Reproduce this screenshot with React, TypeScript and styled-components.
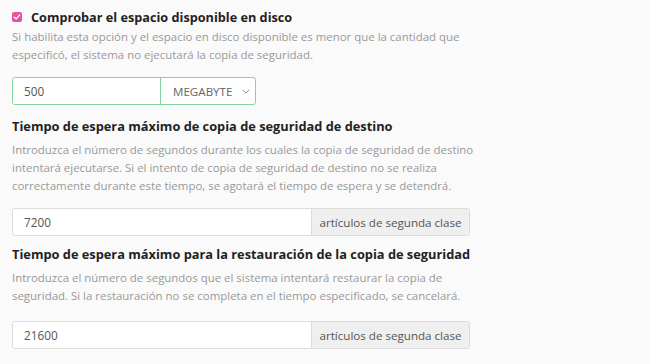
import React from "react";
import styled, { createGlobalStyle } from "styled-components";

const GlobalStyle = createGlobalStyle`
  html, body {
    margin: 0;
    padding: 0;
    background: #fafafa;
  }
  body {
    font-family: "Open Sans", "Liberation Sans", sans-serif;
  }
`;

export default function App() {
  return (
    <>
      <GlobalStyle />
      <StyledPage>
        <StyledCheckRow>
          <StyledCheckbox>
            <svg viewBox="0 0 10 10" width="8" height="8">
              <path
                d="M1.6 5.2 L4 7.4 L8.4 2.4"
                fill="none"
                stroke="#fff"
                strokeWidth="1.6"
                strokeLinecap="round"
                strokeLinejoin="round"
              />
            </svg>
          </StyledCheckbox>
          <StyledLabel>Comprobar el espacio disponible en disco</StyledLabel>
        </StyledCheckRow>
        <StyledHelp>
          Si habilita esta opción y el espacio en disco disponible es menor que
          la cantidad que
          <br />
          especificó, el sistema no ejecutará la copia de seguridad.
        </StyledHelp>

        <StyledGroup $width={242} $gap={13} $accent>
          <StyledInput>500</StyledInput>
          <StyledSelect>
            MEGABYTE
            <svg viewBox="0 0 10 6" width="8" height="5">
              <path
                d="M1 1 L5 5 L9 1"
                fill="none"
                stroke="#888"
                strokeWidth="1.2"
              />
            </svg>
          </StyledSelect>
        </StyledGroup>

        <StyledHeading $gap={12}>
          Tiempo de espera máximo de copia de seguridad de destino
        </StyledHeading>
        <StyledHelp>
          Introduzca el número de segundos durante los cuales la copia de
          seguridad de destino
          <br />
          intentará ejecutarse. Si el intento de copia de seguridad de destino
          no se realiza
          <br />
          correctamente durante este tiempo, se agotará el tiempo de espera y se
          detendrá.
        </StyledHelp>
        <StyledGroup $width={456} $gap={13}>
          <StyledInput>7200</StyledInput>
          <StyledAddon>artículos de segunda clase</StyledAddon>
        </StyledGroup>

        <StyledHeading $gap={9}>
          Tiempo de espera máximo para la restauración de la copia de seguridad
        </StyledHeading>
        <StyledHelp>
          Introduzca el número de segundos que el sistema intentará restaurar la
          copia de
          <br />
          seguridad. Si la restauración no se completa en el tiempo
          especificado, se cancelará.
        </StyledHelp>
        <StyledGroup $width={456} $gap={16}>
          <StyledInput>21600</StyledInput>
          <StyledAddon>artículos de segunda clase</StyledAddon>
        </StyledGroup>
      </StyledPage>
    </>
  );
}

const StyledPage = styled.main`
  width: 650px;
  height: 364px;
  box-sizing: border-box;
  padding: 9px 12px 0;
  overflow: hidden;
`;

const StyledCheckRow = styled.div`
  display: flex;
  align-items: center;
  gap: 9px;
  height: 16px;
`;

const StyledCheckbox = styled.span`
  width: 10px;
  height: 10px;
  border-radius: 2px;
  background: #e9529d;
  display: flex;
  align-items: center;
  justify-content: center;
`;

const StyledLabel = styled.span`
  font-size: 12.7px;
  font-weight: 700;
  color: #222;
`;

const StyledHeading = styled.h3<{ $gap: number }>`
  margin: ${(p) => p.$gap}px 0 6px;
  font-size: 12.8px;
  font-weight: 700;
  color: #222;
  line-height: 18px;
`;

const StyledHelp = styled.p`
  margin: 3px 0 0;
  font-size: 11.45px;
  line-height: 18px;
  color: #999;
`;

const StyledGroup = styled.div<{ $width: number; $gap: number; $accent?: boolean }>`
  display: flex;
  width: ${(p) => p.$width}px;
  height: 26px;
  margin-top: ${(p) => p.$gap}px;
  border: 1px solid ${(p) => (p.$accent ? "#86d49d" : "#dcdcdc")};
  border-radius: 3px;
  overflow: hidden;
  background: #fff;
`;

const StyledInput = styled.div`
  flex: 1;
  display: flex;
  align-items: center;
  padding: 0 11px;
  font-size: 11.8px;
  color: #555;
  background: #fff;
`;

const StyledSelect = styled.div`
  width: 95px;
  box-sizing: border-box;
  border-left: 1px solid #86d49d;
  display: flex;
  align-items: center;
  justify-content: space-between;
  padding: 0 5px 0 12px;
  font-size: 11.6px;
  color: #666;
`;

const StyledAddon = styled.div`
  width: 158px;
  box-sizing: border-box;
  border-left: 1px solid #dcdcdc;
  background: #efefef;
  display: flex;
  align-items: center;
  justify-content: center;
  font-size: 11.6px;
  color: #555;
`;
